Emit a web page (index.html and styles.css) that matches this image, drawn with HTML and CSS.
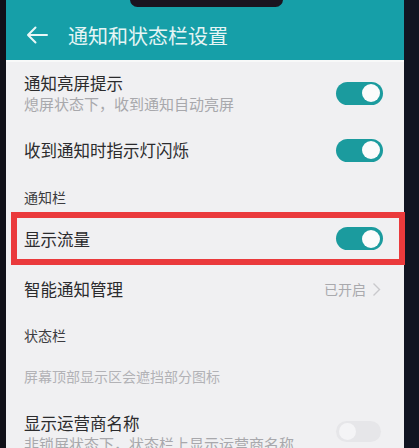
FILE: index.html
```html
<!DOCTYPE html>
<html lang="zh">
<head>
<meta charset="utf-8">
<link rel="stylesheet" href="styles.css">
</head>
<body>
<div class="device">
  <div class="bezel-left"></div>
  <div class="screen">
    <div class="notch"></div>
    <header class="appbar">
      <svg class="back" width="22" height="18" viewBox="0 0 22 18">
        <path d="M21 9H2M9.5 1.5L2 9l7.5 7.5" fill="none" stroke="#e9f7f7" stroke-width="2" stroke-linecap="round" stroke-linejoin="round"/>
      </svg>
      <h1 class="title">通知和状态栏设置</h1>
    </header>
    <main class="content">
      <div class="row row-two first">
        <div class="texts">
          <div class="label">通知亮屏提示</div>
          <div class="sub">熄屏状态下，收到通知自动亮屏</div>
        </div>
        <span class="switch on"><span class="knob"></span></span>
      </div>
      <div class="row row-one">
        <div class="label">收到通知时指示灯闪烁</div>
        <span class="switch on"><span class="knob"></span></span>
      </div>
      <div class="section s1">通知栏</div>
      <div class="row row-one highlight">
        <div class="label">显示流量</div>
        <span class="switch on"><span class="knob"></span></span>
      </div>
      <div class="row row-nav">
        <div class="label">智能通知管理</div>
        <div class="value">已开启
          <svg width="9" height="15" viewBox="0 0 9 15"><path d="M1.5 1.5l6 6-6 6" fill="none" stroke="#c9c9cc" stroke-width="1.4"/></svg>
        </div>
      </div>
      <div class="section s2">状态栏</div>
      <div class="note">屏幕顶部显示区会遮挡部分图标</div>
      <div class="row row-two last">
        <div class="texts">
          <div class="label">显示运营商名称</div>
          <div class="sub">非锁屏状态下，状态栏上显示运营商名称</div>
        </div>
        <span class="switch off"><span class="knob"></span></span>
      </div>
    </main>
  </div>
  <div class="bezel-right"></div>
</div>
</body>
</html>
```

FILE: styles.css
```css
* { box-sizing: border-box; }
html, body {
  margin: 0;
  padding: 0;
  background: #0e0e16;
  font-family: "Noto Sans CJK SC", "Noto Sans", sans-serif;
}
.device {
  display: flex;
  width: 419px;
  height: 448px;
  overflow: hidden;
}
.bezel-left { width: 6px; flex: none; background: #101018; }
.bezel-right { flex: 1; background: #111522; }
.screen {
  position: relative;
  width: 398px;
  flex: none;
  background: #f0f0f2;
  display: flex;
  flex-direction: column;
}
.notch {
  position: absolute;
  left: 124px;
  top: -8px;
  width: 153px;
  height: 15px;
  background: #1a1420;
  border-radius: 8px;
  z-index: 2;
}
.appbar {
  height: 60px;
  flex: none;
  background: #169fa8;
  display: flex;
  align-items: center;
  padding: 10px 0 0 20px;
}
.back { flex: none; margin-right: 20px; }
.title {
  margin: 0;
  font-size: 20px;
  font-weight: 400;
  color: #e6f5f5;
  letter-spacing: 0;
}
.content {
  display: flex;
  flex-direction: column;
  border-top: 2px solid #f8f9f9;
}
.row {
  display: flex;
  align-items: center;
  justify-content: space-between;
  padding: 0 21px 0 18px;
}
.label {
  font-size: 16.5px;
  line-height: 22px;
  color: #2b2b2d;
}
.sub {
  font-size: 15px;
  line-height: 20px;
  color: #a8a8ac;
}
.row-two.first { height: 62px; padding-top: 0; }
.row-two.first .texts { margin-top: 0; }
.row-one { height: 52px; }
.section {
  font-size: 14px;
  line-height: 20px;
  color: #3c3c40;
  padding: 0 18px;
}
.s1 { padding-top: 11px; padding-bottom: 5px; }
.highlight {
  height: 53px;
  margin: 0 -1px 0 5px;
  border: 6px solid #ea3a3c;
  padding: 0 16px 0 7px;
}
.row-nav { height: 48px; }
.value {
  display: flex;
  align-items: center;
  gap: 6px;
  font-size: 14px;
  color: #a9a9ad;
  margin-right: 2px;
}
.s2 { padding-top: 12px; padding-bottom: 5px; }
.note {
  font-size: 14px;
  line-height: 20px;
  color: #b2b2b6;
  padding: 16px 18px 16px;
}
.row-two.last { padding-top: 10px; align-items: flex-start; }
.row-two.last .switch { margin-top: 9px; margin-right: 2px; }
.switch {
  position: relative;
  flex: none;
  width: 47px;
  height: 23px;
  border-radius: 12px;
}
.switch.on { background: #1b9b9e; }
.switch.off { background: #e6e6e9; width: 45px; height: 21px; }
.knob {
  position: absolute;
  top: 2.5px;
  right: 3px;
  width: 18px;
  height: 18px;
  border-radius: 50%;
  background: #fbfbfb;
}
.switch.off .knob {
  right: auto;
  left: 3px;
  top: 2px;
  width: 17px;
  height: 17px;
  background: #f4f4f6;
}
```
